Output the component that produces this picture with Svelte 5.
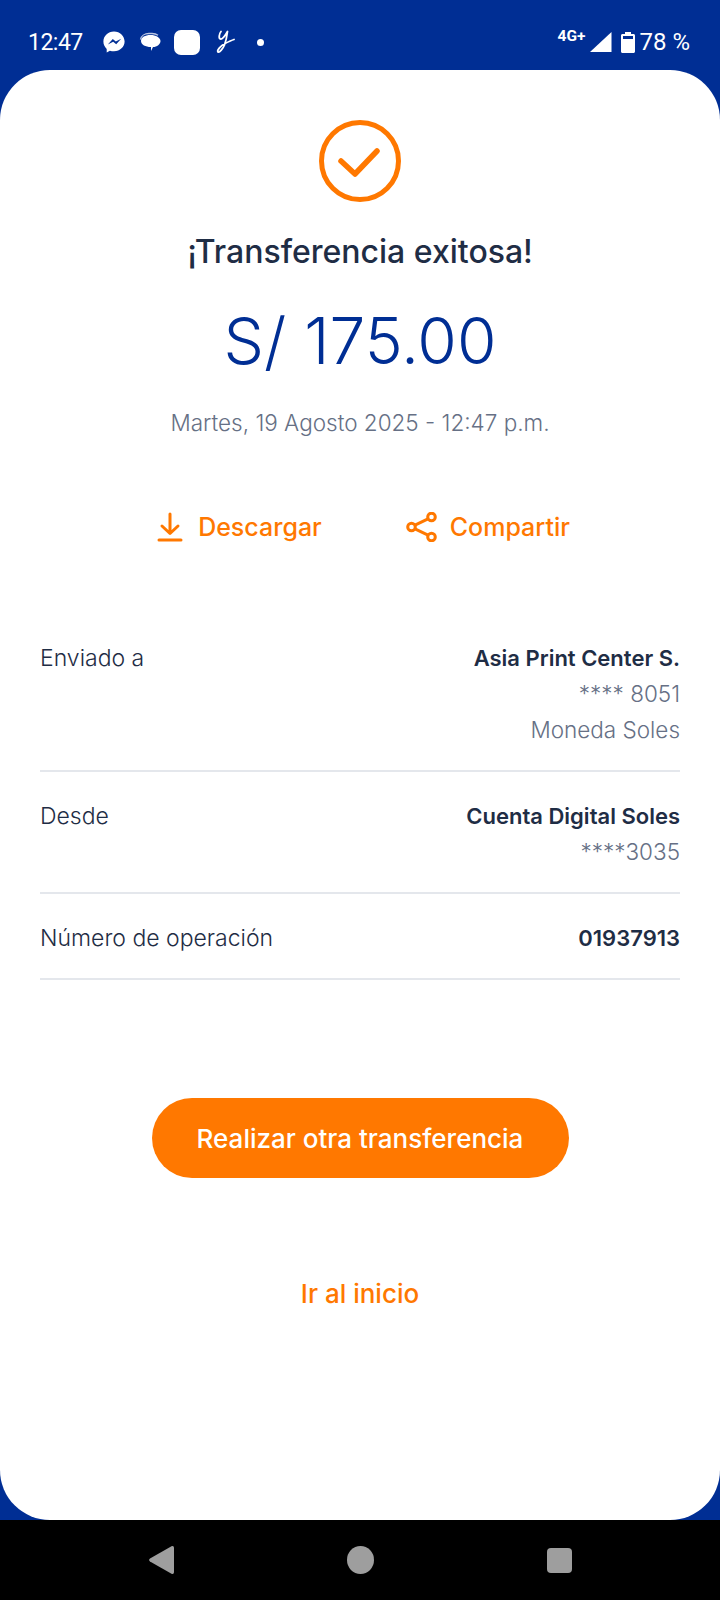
<script>
  const rows = [
    { label: 'Enviado a', value: 'Asia Print Center S.', extra: ['**** 8051', 'Moneda Soles'] },
    { label: 'Desde', value: 'Cuenta Digital Soles', extra: ['****3035'] },
    { label: 'Número de operación', value: '01937913', extra: [] }
  ]
</script>

<div class="screen">
  <div class="status">
    <span class="time">12:47</span>
    <div class="notifs">
      <svg width="24" height="24" viewBox="0 0 24 24">
        <path fill="#fff" d="M12 1.500C6 1.500 1.400 5.900 1.400 11.600c0 3 1.200 5.500 3.300 7.300V22.500l3.200-1.800c1.300.4 2.700.6 4.100.6 6 0 10.600-4.400 10.600-9.700S18 1.500 12 1.500z"/>
        <path fill="#002e94" d="M5.800 14.500l5-5.500 3 2.600 5.400-2.800-5 5.500-3-2.600z"/>
      </svg>
      <svg width="24" height="24" viewBox="0 0 24 24">
        <path fill="none" stroke="#b9c5e2" stroke-width="1.300" d="M2.500 9.500C3 6 6.500 3.500 11 3.500h3c2.500 0 4.500.6 6 1.800"/>
        <path fill="#fff" d="M12.500 5c5.500 0 10 2.700 10 6s-3.500 6-7.500 6l-2 4v-4c-5.500 0-10-2.300-10-6s4-6 9.500-6z"/>
      </svg>
      <span class="app-square"></span>
      <svg class="script-y" width="22" height="26" viewBox="0 0 22 26">
        <path fill="none" stroke="#fff" stroke-width="1.800" stroke-linecap="round" stroke-linejoin="round" d="M6 2.500C4 5 3.500 9.500 5.500 10 8 10.500 10.500 6 12.500 2.500c-.5 4-1.500 9.500-3 13.500-1.500 3.500-5 8-6.500 7-1.500-1.500 3-6.500 7-8.500 3-1.500 6-3 9-4"/>
      </svg>
      <span class="dot"></span>
    </div>
    <div class="status-right">
      <span class="net">4G+</span>
      <svg class="signal" width="22" height="20" viewBox="0 0 22 20"><path fill="#fff" d="M21.500 0v20H0z"/></svg>
      <svg class="battery" width="14" height="21" viewBox="0 0 14 21">
        <path fill="#fff" d="M4 0h6v2h2.500c.8 0 1.500.7 1.500 1.500V19.500c0 .8-.7 1.500-1.500 1.500h-11C.7 21 0 20.300 0 19.500V3.500C0 2.700.7 2 1.500 2H4z"/>
        <rect x="2" y="4" width="10" height="3" fill="#002e94"/>
      </svg>
      <span class="pct">78 %</span>
    </div>
  </div>

  <main class="card">
    <svg class="check" width="82" height="82" viewBox="0 0 82 82">
      <circle cx="41" cy="41" r="38.500" fill="none" stroke="#ff7800" stroke-width="5"/>
      <path fill="none" stroke="#ff7800" stroke-width="5.500" stroke-linecap="round" stroke-linejoin="round" d="M22 41l14 13 22-23"/>
    </svg>
    <h1>¡Transferencia exitosa!</h1>
    <div class="amount">S/ 175.00</div>
    <div class="date">Martes, 19 Agosto 2025 - 12:47 p.m.</div>

    <div class="actions">
      <button>
        <svg width="26" height="30" viewBox="0 0 26 30">
          <path fill="none" stroke="#ff7800" stroke-width="3" stroke-linecap="round" stroke-linejoin="round" d="M13 2v19M5 14l8 7.500L21 14M2 28h22"/>
        </svg>
        Descargar
      </button>
      <button class="share">
        <svg width="31" height="30" viewBox="0 0 31 30">
          <g fill="none" stroke="#ff7800" stroke-width="3">
            <circle cx="25.500" cy="5" r="3.800"/>
            <circle cx="5.500" cy="15" r="3.800"/>
            <circle cx="25.500" cy="25" r="3.800"/>
            <path d="M9 13.200l13-6.400M9 16.800l13 6.400"/>
          </g>
        </svg>
        Compartir
      </button>
    </div>

    <div class="details">
      {#each rows as row}
        <div class="row">
          <span class="label">{row.label}</span>
          <div class="right">
            <div class="value">{row.value}</div>
            {#each row.extra as line}
              <div class="extra">{line}</div>
            {/each}
          </div>
        </div>
      {/each}
    </div>

    <button class="primary">Realizar otra transferencia</button>
    <button class="link">Ir al inicio</button>
  </main>

  <nav class="navbar">
    <svg width="25" height="28" viewBox="0 0 25 28"><path fill="#9e9e9e" d="M22.500.300c1.500-.8 2.500.2 2.500 1.700v24c0 1.500-1 2.500-2.500 1.700L1 15.500c-1.200-.8-1.200-2.200 0-3z"/></svg>
    <span class="home"></span>
    <span class="recent"></span>
  </nav>
</div>

<style>
  :global(body) {
    margin: 0;
  }

  .screen {
    width: 720px;
    height: 1600px;
    background: #002e94;
    display: flex;
    flex-direction: column;
    font-family: 'Inter', 'Liberation Sans', sans-serif;
    overflow: hidden;
  }

  .status {
    height: 70px;
    flex: none;
    display: flex;
    align-items: center;
    padding: 14px 30px 0 28px;
    box-sizing: border-box;
    color: #fff;
  }

  .time {
    font-family: 'Roboto', sans-serif;
    font-size: 23px;
    letter-spacing: -0.5px;
    margin-right: 19px;
  }

  .notifs {
    display: flex;
    align-items: center;
    gap: 12px;
  }

  .app-square {
    width: 26px;
    height: 25px;
    background: #fff;
    border-radius: 7px;
  }

  .script-y {
    margin-left: 3px;
  }

  .dot {
    width: 7px;
    height: 7px;
    margin-left: 8px;
    background: #fff;
    border-radius: 50%;
  }

  .status-right {
    margin-left: auto;
    display: flex;
    align-items: center;
  }

  .net {
    font-family: 'Roboto', sans-serif;
    font-size: 15.500px;
    font-weight: 700;
    margin: -12px 5px 0 0;
  }

  .battery {
    margin: 0 4px 0 9px;
  }

  .pct {
    font-family: 'Roboto', sans-serif;
    font-size: 24px;
  }

  .card {
    flex: 1;
    background: #fff;
    border-radius: 50px;
    display: flex;
    flex-direction: column;
    align-items: center;
    padding: 50px 40px 0;
    min-height: 0;
  }

  h1 {
    margin: 30px 0 0;
    font-size: 32px;
    font-weight: 500;
    color: #1f2d45;
    line-height: 40px;
  }

  .amount {
    margin-top: 29px;
    font-size: 64px;
    font-weight: 300;
    line-height: 80px;
    color: #002e94;
  }

  .date {
    margin-top: 27px;
    font-size: 22.500px;
    font-weight: 300;
    line-height: 30px;
    color: #667085;
  }

  button {
    background: none;
    border: none;
    padding: 0;
    font-family: inherit;
  }

  .actions {
    margin-top: 74px;
    padding-left: 7px;
    display: flex;
    gap: 84px;
  }

  .actions button {
    display: flex;
    align-items: center;
    gap: 15px;
    font-size: 25px;
    font-weight: 500;
    color: #ff7800;
  }

  .actions .share {
    gap: 13px;
  }

  .details {
    align-self: stretch;
    margin-top: 72px;
  }

  .row {
    display: flex;
    justify-content: space-between;
    padding: 26px 0 22px;
    border-bottom: 2px solid #e4e7ec;
    font-size: 22px;
    line-height: 36px;
  }

  .label {
    font-size: 23px;
    font-weight: 300;
    color: #1f2d45;
  }

  .right {
    text-align: right;
  }

  .value {
    font-weight: 600;
    color: #1f2d45;
  }

  .extra {
    font-size: 22.500px;
    font-weight: 300;
    color: #667085;
  }

  .primary {
    margin-top: 118px;
    width: 417px;
    height: 80px;
    border-radius: 40px;
    background: #ff7800;
    color: #fff;
    font-size: 26px;
    font-weight: 500;
  }

  .link {
    margin-top: 100px;
    font-size: 26px;
    font-weight: 500;
    color: #ff7800;
  }

  .navbar {
    height: 80px;
    flex: none;
    background: #000;
    display: flex;
    align-items: center;
    justify-content: center;
    gap: 173px;
  }

  .home {
    width: 27px;
    height: 28px;
    background: #9e9e9e;
    border-radius: 50%;
  }

  .recent {
    width: 25px;
    height: 25px;
    background: #9e9e9e;
    border-radius: 4px;
  }
</style>
